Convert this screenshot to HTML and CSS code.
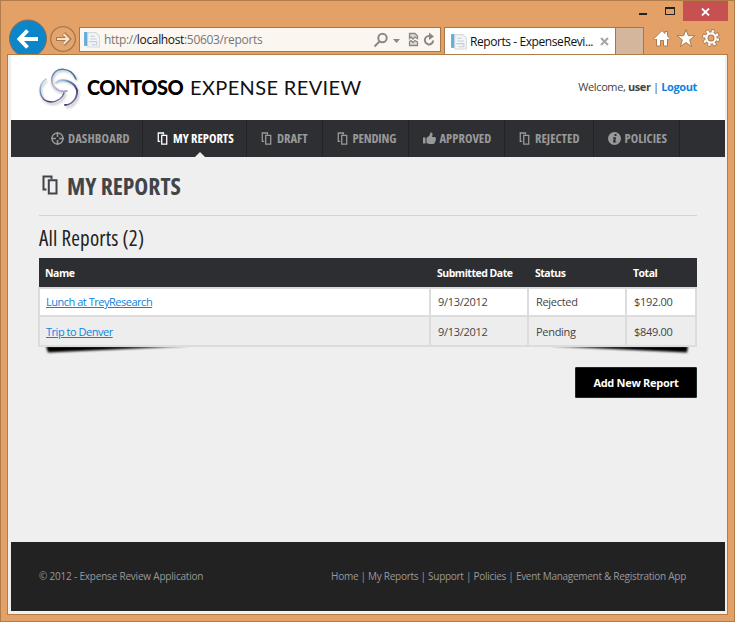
FILE: index.html
```
<!DOCTYPE html>
<html lang="en">
<head>
<meta charset="utf-8">
<title>Reports - ExpenseReview</title>
<link rel="stylesheet" href="styles.css">
</head>
<body>
<svg class="defs" width="0" height="0">
  <defs>
    <symbol id="copy" viewBox="0 0 16 20"><path d="M4.500 14.500H1.500V1.500H9.500V4M6.800 5.300H14.500V18.500H6.800Z" fill="none" stroke="currentColor" stroke-width="2"/></symbol>
    <symbol id="page" viewBox="0 0 16 16"><path d="M4.500 1.500H12L15.500 5V15H4.500Z" fill="#f3f5f6" stroke="#d5dade"/><path d="M7 5h4M7 7.500h6M6 10h7v3H8" fill="none" stroke="#c3cdd4"/><path d="M1 1h3v13H1z" fill="#62addd"/></symbol>
  </defs>
</svg>
<div class="window">
  <div class="caption">
    <i class="min"></i><i class="max"></i>
    <span class="close"><svg width="9" height="8" viewBox="0 0 9 8"><path d="M1 .5L8 7.500M8 .5L1 7.500" stroke="#fff" stroke-width="1.800"/></svg></span>
  </div>
  <div class="toolbar">
    <svg class="history" width="70" height="36" viewBox="8 18 70 36">
      <circle cx="28" cy="38.500" r="18.500" fill="#0c86c8" stroke="#8a6b50"/>
      <path d="M38 39H20M27.500 30.500L19.500 39L27.500 47.500" fill="none" stroke="#fff" stroke-width="4"/>
      <circle cx="63" cy="39" r="12.300" fill="#e3a56f" stroke="#a87748" stroke-width="1.300"/>
      <path d="M56 39H68M63.500 33.500L69 39L63.500 44.500" fill="none" stroke="#a87748" stroke-width="4"/>
      <path d="M57 39H68M63.500 34L68.500 39L63.500 44" fill="none" stroke="#fae3cd" stroke-width="2"/>
    </svg>
    <div class="address">
      <svg width="17" height="17"><use href="#page"/></svg>
      <span class="url">http://<b>localhost</b>:50603/reports</span>
      <svg class="tools" width="64" height="16" viewBox="372 31 64 16">
        <g fill="none" stroke="#8b8783" stroke-width="2"><circle cx="382.500" cy="37" r="4.200"/><path d="M379.500 40.500L374.500 45.500"/></g>
        <path d="M393 38h7l-3.500 4z" fill="#8b8783"/>
        <path d="M409.500 37.500V32.500H415L417.500 35V37.500L415 36L413 38L411 36ZM409.500 40.500L411 39.500L413 41.500L415 39.500L417.500 41V44.500H409.500Z" fill="#ddd9d5" stroke="#8b8783" stroke-width="1.300"/>
        <path d="M431.500 35.800A4.200 4.200 0 1 0 433.200 39.500" fill="none" stroke="#8b8783" stroke-width="2"/><path d="M429 31.500L434 35.500L429 39z" fill="#8b8783"/>
      </svg>
    </div>
    <div class="tab">
      <svg width="17" height="17"><use href="#page"/></svg>
      <span class="tabname">Reports - ExpenseRevi...</span>
      <svg width="9" height="9" viewBox="0 0 9 9"><path d="M1 1L8 8M8 1L1 8" stroke="#a6a6a6" stroke-width="2"/></svg>
    </div>
    <div class="newtab"></div>
    <svg class="actions" width="70" height="22" viewBox="652 27 70 22">
      <g fill="#fff" stroke="#a87b52" stroke-width="1" stroke-linejoin="round">
        <path d="M654 38.500L662 30.500L665 33.500V31.500H667.500V36L670 38.500L668.500 40L667.500 39V46H663.500V40.500H660.500V46H656.500V39L655.500 40Z"/>
        <path d="M686 29.500L688.300 35.700H695L689.700 39.800L691.600 46.500L686 42.500L680.400 46.500L682.300 39.800L677 35.700H683.700Z"/>
      </g>
      <g fill="none"><circle cx="711" cy="38" r="6.800" stroke="#a87b52" stroke-width="4.400" stroke-dasharray="3.400 1.940"/><circle cx="711" cy="38" r="4.600" stroke="#a87b52" stroke-width="4.200"/><circle cx="711" cy="38" r="6.800" stroke="#fff" stroke-width="2.600" stroke-dasharray="2.400 2.940" stroke-dashoffset="-.5"/><circle cx="711" cy="38" r="4.600" stroke="#fff" stroke-width="2.200"/></g>
    </svg>
  </div>
  <div class="page">
    <header class="head">
      <svg class="logo" width="48" height="48" viewBox="36 65 48 48">
        <defs><linearGradient id="arc" x1="0" y1="0" x2="1" y2="1"><stop offset="0" stop-color="#c9dbee"/><stop offset=".3" stop-color="#6d8fc2"/><stop offset=".7" stop-color="#393278"/><stop offset="1" stop-color="#c3bddc"/></linearGradient>
        <linearGradient id="arcTop" x1="0" y1="1" x2="1" y2="0"><stop offset="0" stop-color="#d5d2ea"/><stop offset=".4" stop-color="#7a79bb"/><stop offset=".6" stop-color="#4f92c2"/><stop offset="1" stop-color="#27457c"/></linearGradient>
        <filter id="soft"><feGaussianBlur stdDeviation="1.100"/></filter></defs>
        <g fill="none" stroke="#999" stroke-width="2" opacity=".6" filter="url(#soft)"><path d="M77 82C73 70 57 68 53 79C50 88 58 95 66 93M47 82C37 88 40 104 52 105C60 105 65 99 65 95M56 84C63 79 75 84 78 92C80 102 72 109 66 108"/></g>
        <g fill="none" stroke-width="1.400" stroke-linecap="round"><path stroke="url(#arcTop)" d="M76 80C71 68 56 67 52 78C50 87 58 94 67 92"/><path stroke="url(#arc)" d="M46 80C37 85 38 102 51 103C58 103 63 98 64 94"/><path stroke="url(#arc)" stroke-width="1.800" d="M56 84C61 78 74 82 77 91C78 99 72 106 65 106"/></g>
      </svg>
      <div class="brand"><span class="contoso">CONTOSO</span><span class="review">EXPENSE REVIEW</span></div>
      <div class="welcome">Welcome, <b>user</b> | <a href="#">Logout</a></div>
    </header>
    <nav class="nav">
      <a class="item dash"><svg width="13" height="13" viewBox="0 0 13 13"><g fill="none" stroke="currentColor"><circle cx="6.500" cy="6.500" r="5.500" stroke-width="1.400"/><path d="M6.500 0V5M6.500 8V13M0 6.500H5M8 6.500H13" stroke-width="1.600"/></g></svg><span>DASHBOARD</span></a>
      <a class="item mine"><svg class="copy"><use href="#copy"/></svg><span>MY REPORTS</span></a>
      <a class="item draft"><svg class="copy"><use href="#copy"/></svg><span>DRAFT</span></a>
      <a class="item pend"><svg class="copy"><use href="#copy"/></svg><span>PENDING</span></a>
      <a class="item appr"><svg width="13" height="13" viewBox="0 0 13 13"><path d="M0 5.500H2.500V11.500H0ZM3.500 6L6.500 3.500L7.500 .5Q10 0 9.500 3L9 5H12Q13.500 6 12.700 7.500Q13 9 12 9.800Q12 12 10 12H6L3.500 11Z" fill="currentColor"/></svg><span>APPROVED</span></a>
      <a class="item rej"><svg class="copy"><use href="#copy"/></svg><span>REJECTED</span></a>
      <a class="item pol"><svg width="13" height="13" viewBox="0 0 13 13"><circle cx="6.500" cy="6.500" r="6.500" fill="currentColor"/><path d="M6.500 2h2v2h-2zM5 5.200h3L7.300 9.500H8.300V10.500H5L5.700 6.300H5Z" fill="#2e2f33"/></svg><span>POLICIES</span></a>
    </nav>
    <main class="main">
      <h1><svg width="16" height="20"><use href="#copy"/></svg><span>MY REPORTS</span></h1>
      <h2>All Reports (2)</h2>
      <div class="tablewrap">
        <svg class="shadow" width="658" height="14" viewBox="0 0 658 14"><defs><filter id="blur" x="-5%" y="-50%" width="110%" height="200%"><feGaussianBlur stdDeviation="1"/></filter></defs><path d="M7 0H150L9 6.500ZM510 0H649L648 6.500Z" filter="url(#blur)"/></svg>
        <table>
          <thead><tr><th>Name</th><th>Submitted Date</th><th>Status</th><th>Total</th></tr></thead>
          <tbody>
            <tr><td><a href="#">Lunch at TreyResearch</a></td><td>9/13/2012</td><td>Rejected</td><td>$192.00</td></tr>
            <tr><td><a href="#">Trip to Denver</a></td><td>9/13/2012</td><td>Pending</td><td>$849.00</td></tr>
          </tbody>
        </table>
      </div>
      <button class="add">Add New Report</button>
    </main>
    <footer class="foot"><span class="copyr">© 2012 - Expense Review Application</span><span class="links">Home | My Reports | Support | Policies | Event Management &amp; Registration App</span></footer>
  </div>
</div>
</body>
</html>
```
FILE: styles.css
```
* { box-sizing: border-box; }
body { margin: 0; font: 11px/16px "Open Sans", "Noto Sans", sans-serif; color: #444; }
svg { display: block; flex: none; }
.defs { position: absolute; }
a { color: #0b84e0; }
.window { width: 735px; height: 622px; background: #e3a167; border: 1px solid #b07c49; padding: 0 6px; white-space: nowrap; overflow: hidden; }
.caption { display: flex; height: 20px; justify-content: flex-end; }
.min { width: 8px; height: 2px; background: #222; margin: 12px 18px 0 0; }
.max { width: 10px; height: 8px; border: 1px solid #222; border-top-width: 2px; margin: 6px 8px 0 0; }
.close { width: 45px; height: 20px; background: #c75050; display: flex; align-items: center; justify-content: center; padding-top: 2px; }
.toolbar { display: flex; height: 33px; align-items: flex-end; }
.history { margin-left: 1px; }
.address { width: 362px; height: 25px; margin: 0 3px 2px 1px; background: #fcf6f0; border: 1px solid #a87748; display: flex; align-items: center; padding: 0 4px 0 3px; }
.url { font-size: 12px; margin-left: 4px; color: #777; letter-spacing: -.34px; padding-top: 1px; }
.url b { color: #111; font-weight: 400; }
.tools { margin-left: auto; }
.tab { width: 172px; height: 27px; background: #fff; border: 1px solid #a87748; border-bottom: 0; display: flex; align-items: center; padding: 1px 6px 0 5px; }
.tabname { font-size: 12px; margin-left: 3px; color: #111; width: 130px; letter-spacing: -.42px; }
.newtab { width: 28px; height: 27px; background: #d3b69b; border: 1px solid #a87748; border-width: 1px 1px 0 0; }
.actions { margin: 0 0 5px 8px; }
.page { height: 561px; border: 1px solid #b07c49; background: #efefef; padding: 0 2px 3px 3px; display: flex; flex-direction: column; }
.head { height: 65px; background: #fff; display: flex; align-items: center; padding: 0 28px 0 25px; flex: none; }
.brand { color: #000; font: 20px/24px Lato, sans-serif; margin: -1px 0 0 3px; display: flex; }
.contoso { font-weight: 900; width: 103px; letter-spacing: -.5px; }
.review { width: 172px; color: #111; letter-spacing: .37px; }
.welcome { margin: -1px 0 0 auto; letter-spacing: -.38px; }
.welcome a { font-weight: 700; text-decoration: none; }
.nav { height: 37px; background: #2e2f33; display: flex; flex: none; padding-left: 27px; }
.item { height: 37px; border-right: 1px solid #222327; display: flex; align-items: center; position: relative; padding-left: 14px; color: #999; }
.item span { font: 700 12.6px/16px "Open Sans", sans-serif; font-stretch: 75%; margin-left: 5px; }
.copy { width: 11px; height: 13px; }
.dash { width: 105px; padding-left: 13px; } .item.mine { width: 104px; color: #fff; } .draft { width: 76px; } .pend { width: 86px; } .appr { width: 96px; } .rej { width: 89px; } .pol { width: 86px; }
.item.dash span { margin-left: 4px; letter-spacing: .1px; }
.item.appr span, .item.pol span { margin-left: 3.5px; }
.item.pend span { margin-left: 4.500px; letter-spacing: -.15px; }
.mine::after { content: ""; position: absolute; left: 52px; bottom: 0; border: 5px solid transparent; border-bottom-color: #efefef; border-top: 0; }
.main { flex: 1; padding: 0 28px; display: flex; flex-direction: column; }
h1 { height: 59px; margin: 0; border-bottom: 1px solid #d4d4d4; display: flex; align-items: center; padding-left: 3px; color: #414549; }
h1 svg { margin-top: -2px; }
h1 span { font: 700 23.6px/30px "Open Sans", sans-serif; font-stretch: 75%; margin-left: 9px; }
h2 { margin: 7px 0 5px; font: 400 21px/30px "Open Sans", sans-serif; font-stretch: 75%; letter-spacing: .18px; color: #222; }
.tablewrap { position: relative; margin-left: -1px; }
table { position: relative; width: 659px; border-collapse: separate; border-spacing: 0; table-layout: fixed; }
th { height: 29px; background: #2d2e31; color: #fff; text-align: left; padding: 1px 6px 0; font-weight: 700; font-size: 10.5px; letter-spacing: -.5px; }
th:nth-child(1) { width: 393px; border-left: 1px solid transparent; background-clip: padding-box; }
th:nth-child(2), th:nth-child(3) { width: 98px; }
td { height: 28px; border: 0 solid #dcdcdc; border-width: 0 2px 2px 0; padding: 2px 0 0 7px; background: #fff; letter-spacing: -.3px; }
td:first-child { border-left-width: 2px; padding-left: 6px; letter-spacing: -.48px; }
tbody tr:first-child td { height: 30px; border-top-width: 2px; padding-top: 0; }
tbody tr:nth-child(2) td { height: 30px; background: #ededed; }
.shadow { position: absolute; left: 1px; bottom: -13px; }
.add { align-self: flex-end; width: 122px; height: 31px; margin-top: 20px; background: #000; color: #fff; border: 1px solid #1d2b22; border-radius: 1px; font: 700 11px "Open Sans", sans-serif; letter-spacing: -.3px; padding: 0; }
.foot { height: 69px; background: #222; color: #999; display: flex; align-items: center; justify-content: space-between; padding: 0 39px 1px 28px; font-size: 10px; flex: none; }
.copyr { letter-spacing: -.2px; }
.links { letter-spacing: -.28px; }
```
